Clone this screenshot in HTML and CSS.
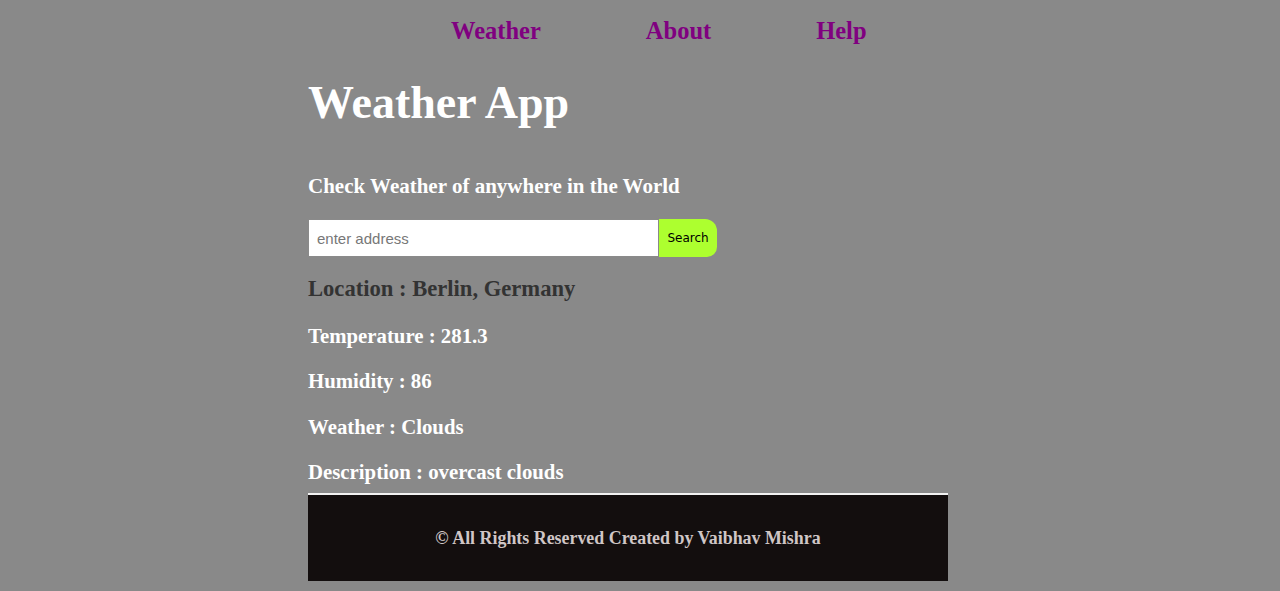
FILE: index.html
```html
<!DOCTYPE html>
<html lang="en">
<head>
<meta charset="utf-8">
<title>Weather App</title>
<link rel="stylesheet" href="styles.css">
</head>
<body>
<nav class="nav">
  <a class="nav-link" href="#">Weather</a>
  <a class="nav-link" href="#">About</a>
  <a class="nav-link" href="#">Help</a>
</nav>
<main class="main">
  <h1 class="title">Weather App</h1>
  <h3 class="subtitle">Check Weather of anywhere in the World</h3>
  <form class="search">
    <input class="search-input" type="text" placeholder="enter address">
    <button class="search-btn" type="button">Search</button>
  </form>
  <p class="line location">Location : Berlin, Germany</p>
  <p class="line">Temperature : 281.3</p>
  <p class="line">Humidity : 86</p>
  <p class="line">Weather : Clouds</p>
  <p class="line">Description : overcast clouds</p>
  <footer class="footer">
    <p class="footer-text">© All Rights Reserved Created by Vaibhav Mishra</p>
  </footer>
</main>
</body>
</html>
```
FILE: styles.css
```css
html, body {
  margin: 0;
  padding: 0;
}
body {
  background: #898989;
  font-family: "Liberation Serif", "Times New Roman", serif;
  height: 591px;
  overflow: hidden;
}
.nav {
  display: flex;
  padding: 17px 0 0 451px;
  gap: 105px;
}
.nav-link {
  font-size: 24.5px;
  font-weight: bold;
  color: #800080;
  text-decoration: none;
  line-height: 28px;
}
.main {
  width: 640px;
  margin-left: 308px;
  display: flex;
  flex-direction: column;
}
.title {
  margin: 32px 0 0 0;
  font-size: 46px;
  line-height: 52px;
  color: #ffffff;
  font-weight: bold;
}
.subtitle {
  margin: 45px 0 0 0;
  font-size: 21px;
  line-height: 24px;
  color: #ffffff;
}
.search {
  display: flex;
  margin-top: 21px;
  height: 38px;
}
.search-input {
  box-sizing: border-box;
  width: 351px;
  height: 38px;
  margin: 0;
  border: 1px solid #8a8a8a;
  padding: 0 8px;
  font-family: "Liberation Sans", Tahoma, sans-serif;
  font-size: 15px;
  color: #333;
  background: #fff;
  outline: none;
}
.search-input::placeholder {
  color: #777;
}
.search-btn {
  box-sizing: border-box;
  width: 58px;
  height: 38px;
  margin: 0;
  border: none;
  background: #adff2f;
  border-radius: 0 12px 10px 0;
  font-family: "DejaVu Sans", Tahoma, sans-serif;
  font-size: 12px;
  color: #000;
  padding: 0;
}
.line {
  margin: 0 0 20.67px 0;
  font-size: 20.8px;
  line-height: 25px;
  font-weight: bold;
  color: #ffffff;
}
.location {
  margin-top: 19px;
  margin-bottom: 21.5px;
  font-size: 22.6px;
  color: #333333;
}
.footer {
  margin-top: -12px;
  height: 86px;
  background: #130e0e;
  border-top: 2px solid #f2f2f2;
  display: flex;
  align-items: center;
  justify-content: center;
}
.footer-text {
  margin: 0;
  font-size: 17.9px;
  font-weight: bold;
  color: #d0c6c6;
}
```
